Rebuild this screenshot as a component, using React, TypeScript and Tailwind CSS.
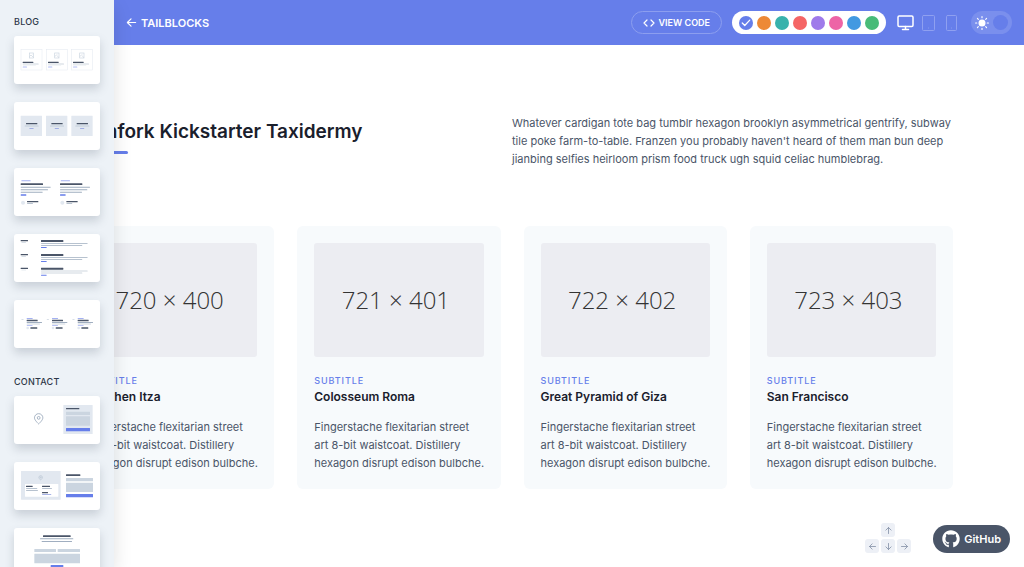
import React from "react";
import { FaGithub } from "react-icons/fa";

type Bar = [x: number, y: number, w: number, h: number, color: string];

const DARK = "#4a5568";
const GRAY = "#a0aec0";
const MID = "#cbd5e0";
const LIGHT = "#e2e8f0";
const MAIN = "#667eea";

function Bars({ items, dx = 0, dy = 0 }: { items: Bar[]; dx?: number; dy?: number }) {
  return (
    <g transform={`translate(${dx} ${dy})`}>
      {items.map(([x, y, w, h, color], i) => (
        <rect key={i} x={x} y={y} width={w} height={h} rx={1} fill={color} />
      ))}
    </g>
  );
}

function Pin({ x, y, scale }: { x: number; y: number; scale: number }) {
  return (
    <g transform={`translate(${x} ${y}) scale(${scale})`} fill="none" stroke={GRAY} strokeWidth={2}>
      <path d="M9 8c0 5-9 13-9 13S-9 13-9 8a9 9 0 0 1 18 0z" transform="translate(0 -9)" />
      <circle cx={0} cy={-1} r={3} />
    </g>
  );
}

const thumbs: Record<string, React.ReactNode> = {
  "Blog A": [20, 96, 171].map((x) => (
    <g key={x} transform={`translate(${x} 40)`}>
      <rect x={1} y={1} width={63} height={61} fill="#fff" stroke={LIGHT} strokeWidth={1.5} />
      <g fill="none" stroke={MID} strokeWidth={2}>
        <rect x={26} y={11} width={13} height={15} />
        <path d="M26 22l5-5 8 8M35 15h1" />
      </g>
      <Bars items={[[6, 37, 32, 4, DARK], [6, 43, 48, 2, GRAY], [6, 47, 40, 1, MID], [6, 52, 13, 2, MAIN]]} />
    </g>
  )),
  "Blog B": [20, 96, 172].map((x) => (
    <Bars key={x} dx={x} dy={41} items={[[0, 0, 64, 61, LIGHT], [16, 22, 34, 4, DARK], [12, 30, 42, 2, GRAY], [26, 38, 13, 2, "#8a9be0"]]} />
  )),
  "Blog C": [0, 118].map((x) => (
    <g key={x} transform={`translate(${x} 0)`}>
      <Bars
        items={[
          [22, 37, 28, 3, "#a3b0f2"],
          [20, 46, 67, 5, DARK],
          [20, 56, 90, 3, GRAY],
          [20, 64, 82, 3, GRAY],
          [20, 71, 66, 3, GRAY],
          [20, 79, 17, 4, MAIN],
          [39, 99, 34, 4, DARK],
          [39, 105, 18, 2, GRAY],
        ]}
      />
      <circle cx={27} cy={104} r={6} fill={LIGHT} />
    </g>
  )),
  "Blog D": [0, 42, 83].map((y) => (
    <Bars
      key={y}
      dy={y}
      items={[
        [20, 18, 22, 4, DARK],
        [22, 24, 14, 2, MID],
        [81, 18, 67, 6, DARK],
        [81, 27, 140, 2, GRAY],
        [81, 33, 124, 2, GRAY],
        [81, 39, 17, 3, MAIN],
      ]}
    />
  )),
  "Blog E": [0, 76, 153].map((x) => (
    <g key={x} transform={`translate(${x} 0)`}>
      <Bars
        items={[
          [22, 57, 7, 2, MID],
          [38, 54, 18, 3, "#a3b0f2"],
          [38, 59, 33, 5, DARK],
          [38, 66, 46, 3, GRAY],
          [38, 71, 40, 2, GRAY],
          [38, 75, 18, 2, "#a3b0f2"],
          [49, 82, 21, 4, DARK],
        ]}
      />
      <circle cx={41} cy={84} r={4} fill={LIGHT} />
    </g>
  )),
  "Contact A": (
    <>
      <Pin x={74} y={67} scale={1.4} />
      <Bars
        items={[
          [148, 27, 88, 87, LIGHT],
          [156, 36, 40, 4, DARK],
          [156, 47, 72, 10, MID],
          [156, 61, 72, 28, MID],
          [156, 96, 72, 10, MAIN],
        ]}
      />
    </>
  ),
  "Contact B": (
    <>
      <Bars
        items={[
          [21, 27, 119, 86, LIGHT],
          [33, 66, 100, 38, "#fff"],
          [36, 71, 20, 4, DARK],
          [36, 78, 34, 2, GRAY],
          [36, 84, 36, 2, GRAY],
          [84, 71, 24, 4, DARK],
          [84, 78, 30, 2, GRAY],
          [84, 90, 18, 4, DARK],
          [84, 97, 28, 2, "#8a9be0"],
          [156, 37, 43, 5, DARK],
          [156, 48, 81, 10, MID],
          [156, 62, 81, 28, MID],
          [156, 96, 81, 10, MAIN],
        ]}
      />
      <Pin x={80} y={47} scale={0.6} />
    </>
  ),
  "Contact C": (
    <Bars
      items={[
        [87, 22, 83, 5, DARK],
        [78, 31, 100, 3, GRAY],
        [83, 39, 91, 3, GRAY],
        [61, 63, 65, 9, MID],
        [131, 63, 67, 9, MID],
        [61, 77, 137, 29, MID],
        [110, 111, 38, 10, MAIN],
      ]}
    />
  ),
};

const groups = [
  { name: "BLOG", items: ["Blog A", "Blog B", "Blog C", "Blog D", "Blog E"] },
  { name: "CONTACT", items: ["Contact A", "Contact B", "Contact C"] },
];

function Sidebar() {
  return (
    <aside className="fixed inset-y-0 left-0 z-20 flex w-[114px] flex-col gap-[27px] overflow-y-auto bg-[#edf2f7] px-[14px] pt-[15px] shadow-[0_7px_18px_rgba(0,0,0,0.12)] [scrollbar-width:none]">
      {groups.map((group) => (
        <section key={group.name} className="flex flex-col gap-[7px]">
          <h2 className="text-[9px] leading-[14px] font-medium tracking-wide text-[#2d3748]">{group.name}</h2>
          <div className="flex flex-col gap-[18px]">
            {group.items.map((item) => (
              <button
                key={item}
                type="button"
                aria-label={item}
                className="block h-12 w-full shrink-0 overflow-hidden rounded-[3px] bg-white shadow-[0_5px_10px_rgba(74,85,104,0.22)]"
              >
                <svg viewBox="0 0 258 144" className="block size-full">
                  {thumbs[item]}
                </svg>
              </button>
            ))}
          </div>
        </section>
      ))}
    </aside>
  );
}

const palette = [
  { name: "indigo", bg: "bg-[#667eea]" },
  { name: "orange", bg: "bg-[#ed8936]" },
  { name: "teal", bg: "bg-[#38b2ac]" },
  { name: "red", bg: "bg-[#f56565]" },
  { name: "purple", bg: "bg-[#9f7aea]" },
  { name: "pink", bg: "bg-[#ed64a6]" },
  { name: "blue", bg: "bg-[#4299e1]" },
  { name: "green", bg: "bg-[#48bb78]" },
];

function Header() {
  return (
    <header className="flex h-[45px] items-center bg-[#667eea] pr-3 pl-[126px] text-white">
      <a href="#home" className="flex items-center gap-1 text-[11px] leading-4 font-semibold">
        <svg viewBox="0 0 24 24" className="size-[11px]" fill="none" stroke="currentColor" strokeWidth={2.6} strokeLinecap="round" strokeLinejoin="round">
          <path d="M21 12H3M11 4l-8 8 8 8" />
        </svg>
        TAILBLOCKS
      </a>
      <button type="button" className="ml-auto flex h-[23px] items-center gap-1 rounded-full border border-[#8c9eef] px-[11px] text-[9px] leading-4 font-semibold">
        <svg viewBox="0 0 24 24" className="size-3" fill="none" stroke="currentColor" strokeWidth={2.4} strokeLinecap="round" strokeLinejoin="round">
          <path d="M16 18l6-6-6-6M8 6l-6 6 6 6" />
        </svg>
        VIEW CODE
      </button>
      <div className="ml-[10px] flex h-[23px] items-center gap-1 rounded-full bg-white px-[7px]">
        {palette.map((color, i) => (
          <button key={color.name} type="button" aria-label={color.name} className={`flex size-[14px] items-center justify-center rounded-full ${color.bg}`}>
            {i === 0 && (
              <svg viewBox="0 0 24 24" className="size-[10px]" fill="none" stroke="#fff" strokeWidth={3} strokeLinecap="round" strokeLinejoin="round">
                <path d="M21 5L9 18l-6-6" />
              </svg>
            )}
          </button>
        ))}
      </div>
      <div className="ml-[11px] flex items-center gap-2">
        <button type="button" aria-label="Desktop">
          <svg viewBox="0 0 17 18" className="block h-[18px] w-[17px]" fill="none" stroke="currentColor" strokeWidth={1.5} strokeLinecap="round" strokeLinejoin="round">
            <rect x={1} y={2} width={15} height={10.5} rx={1.2} />
            <path d="M5.5 15.5h6M8.5 12.5v3" />
          </svg>
        </button>
        <button type="button" aria-label="Tablet" className="text-[#8fa0f0]">
          <svg viewBox="0 0 13 18" className="block h-[18px] w-[13px]" fill="none" stroke="currentColor" strokeLinecap="round">
            <rect x={0.5} y={1.5} width={12} height={15} rx={1} />
            <path d="M6.5 14h.01" />
          </svg>
        </button>
        <button type="button" aria-label="Phone" className="ml-[3px] text-[#8fa0f0]">
          <svg viewBox="0 0 11 18" className="block h-[18px] w-[11px]" fill="none" stroke="currentColor" strokeLinecap="round">
            <rect x={0.5} y={1.5} width={10} height={15} rx={1} />
            <path d="M5.5 14h.01" />
          </svg>
        </button>
      </div>
      <button type="button" aria-label="Toggle dark mode" className="ml-[14px] flex h-[23px] w-[41px] items-center justify-between rounded-full bg-[#7a8fed] px-1">
        <svg viewBox="0 0 24 24" className="size-[14px]" fill="#fff" stroke="#fff" strokeWidth={2} strokeLinecap="round">
          <circle cx={12} cy={12} r={5} />
          <path d="M12 1v2M12 21v2M4.22 4.22l1.42 1.42M18.36 18.36l1.42 1.42M1 12h2M21 12h2M4.22 19.78l1.42-1.42M18.36 5.64l1.42-1.42" />
        </svg>
        <span className="size-[15px] rounded-full bg-[#667eea]" />
      </button>
    </header>
  );
}

const places = [
  { size: "720 × 400", title: "Chichen Itza" },
  { size: "721 × 401", title: "Colosseum Roma" },
  { size: "722 × 402", title: "Great Pyramid of Giza" },
  { size: "723 × 403", title: "San Francisco" },
];

const blurb = "Fingerstache flexitarian street\nart 8-bit waistcoat. Distillery\nhexagon disrupt edison bulbche.";

function Content() {
  return (
    <main className="mx-auto max-w-[882px] pt-[69px] pb-[78px]">
      <div className="mb-[58px] flex items-start">
        <div className="w-1/2 pt-1">
          <h1 className="mb-[5px] text-[19px] leading-7 font-semibold text-[#1a202c]">Pitchfork Kickstarter Taxidermy</h1>
          <div className="h-[3px] w-[57px] rounded bg-[#667eea]" />
        </div>
        <p className="w-1/2 text-[11px] leading-[18px] text-[#4a5568]">
          Whatever cardigan tote bag tumblr hexagon brooklyn asymmetrical gentrify, subway tile poke farm-to-table. Franzen you probably haven't heard of them man
          bun deep jianbing selfies heirloom prism food truck ugh squid celiac humblebrag.
        </p>
      </div>
      <div className="grid grid-cols-4 gap-[23px]">
        {places.map((place) => (
          <article key={place.title} className="rounded-md bg-[#f7fafc] p-[17px]">
            <div className="mb-[17px] flex h-[114px] items-center justify-center rounded-[3px] bg-[#ecedf2] pr-[6px] font-['Open_Sans',sans-serif] text-[24px] font-light text-[#333]">
              {place.size}
            </div>
            <h3 className="text-[9px] leading-[13px] font-medium tracking-widest text-[#667eea]">SUBTITLE</h3>
            <h2 className="mb-[11px] text-[12px] leading-5 font-semibold text-[#1a202c]">{place.title}</h2>
            <p className="-mr-2 text-[11px] leading-[18px] whitespace-pre-line text-[#4a5568]">{blurb}</p>
          </article>
        ))}
      </div>
    </main>
  );
}

const keys = [
  { name: "Up", place: "col-start-2", d: "M12 20V4M5 11l7-7 7 7" },
  { name: "Left", place: "col-start-1", d: "M20 12H4M11 5l-7 7 7 7" },
  { name: "Down", place: "", d: "M12 4v16M5 13l7 7 7-7" },
  { name: "Right", place: "", d: "M4 12h16M13 5l7 7-7 7" },
];

export default function App() {
  return (
    <div className="min-h-screen bg-white font-['Inter',sans-serif]">
      <Header />
      <Sidebar />
      <Content />
      <div className="fixed right-[14px] bottom-[14px] z-10 flex items-end gap-[22px]">
        <div className="grid grid-cols-3 gap-[2px]">
          {keys.map((key) => (
            <span key={key.name} className={`flex size-[14px] items-center justify-center rounded-[3px] bg-[#edf0f6] text-[#8592a8] ${key.place}`}>
              <svg viewBox="0 0 24 24" className="size-[9px]" fill="none" stroke="currentColor" strokeWidth={2.2} strokeLinecap="round" strokeLinejoin="round">
                <path d={key.d} />
              </svg>
            </span>
          ))}
        </div>
        <a href="#github" className="flex h-7 items-center gap-1 rounded-full bg-[#4a5568] px-[9px] text-[11px] leading-4 font-semibold text-white">
          <FaGithub className="size-[18px]" />
          GitHub
        </a>
      </div>
    </div>
  );
}
